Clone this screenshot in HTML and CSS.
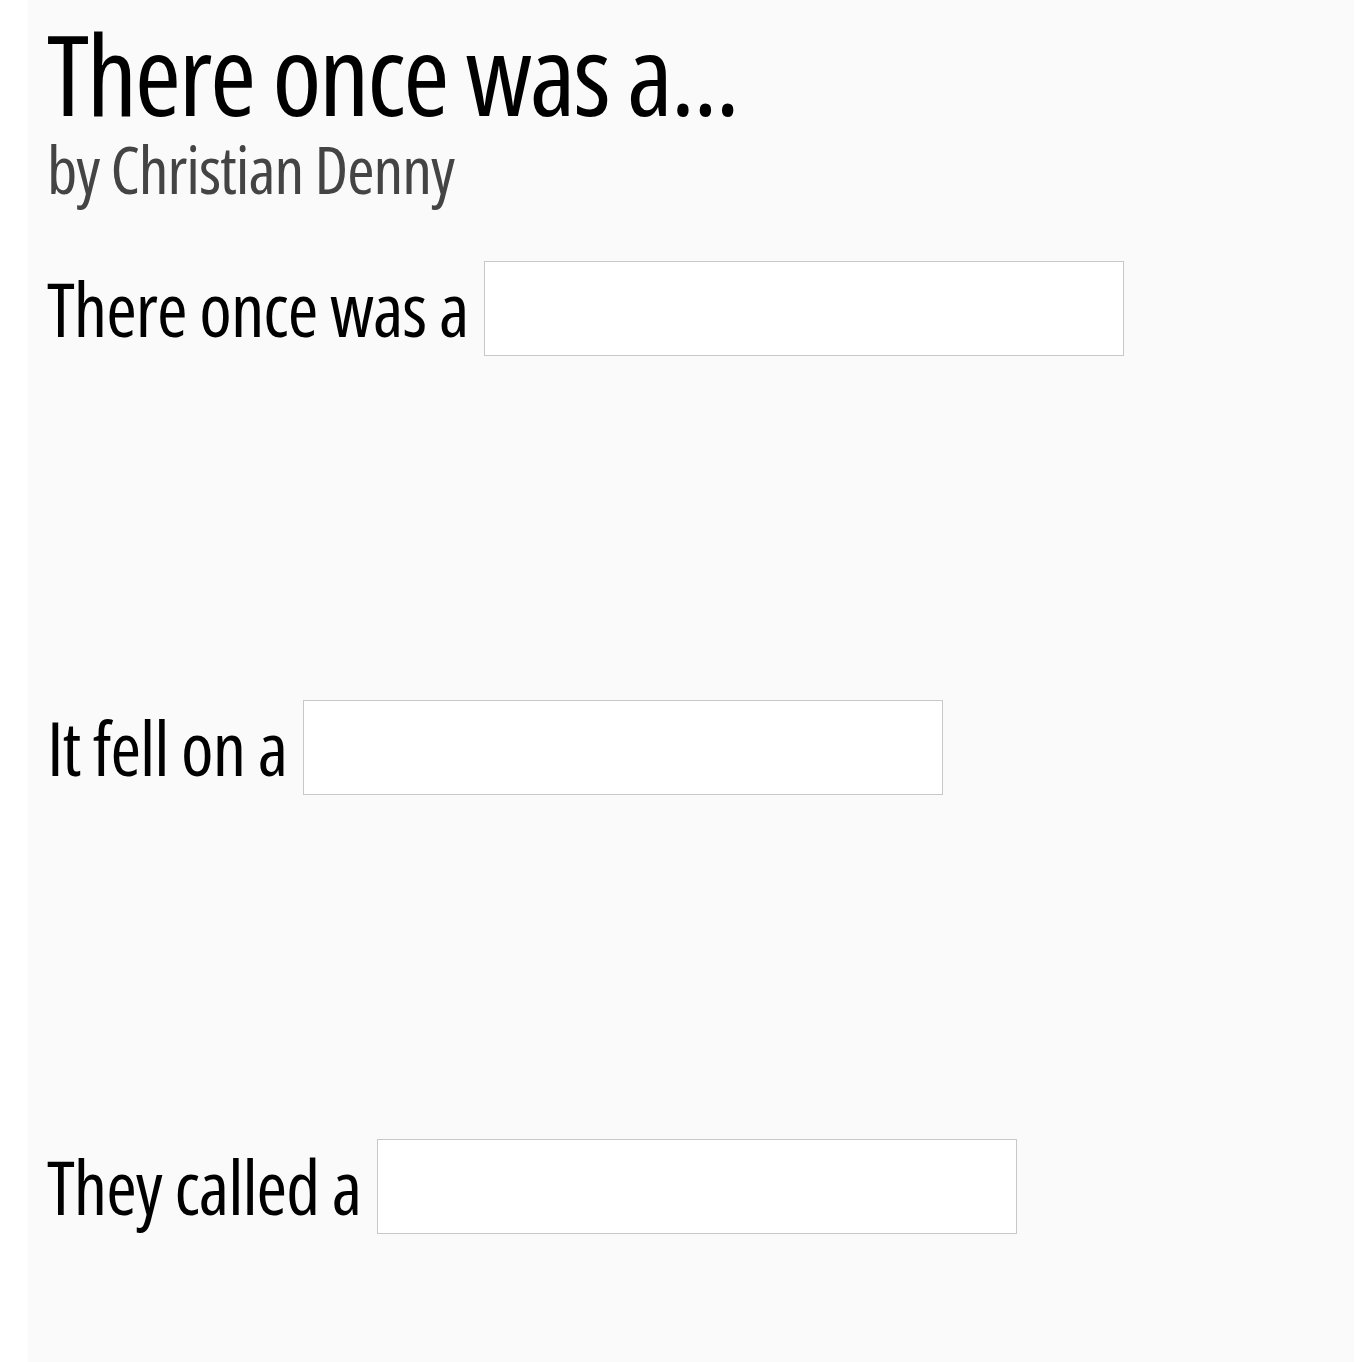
FILE: index.html
```html
<!DOCTYPE html>
<html>
<head>
<meta charset="utf-8">
<link rel="stylesheet" href="styles.css">
</head>
<body>
<main class="page">
  <header class="head">
    <h1 class="title">There once was a...</h1>
    <p class="byline">by Christian Denny</p>
  </header>
  <section class="row row-first">
    <label class="prompt">There once was a</label>
    <input class="field" type="text">
  </section>
  <section class="row">
    <label class="prompt">It fell on a</label>
    <input class="field" type="text">
  </section>
  <section class="row">
    <label class="prompt">They called a</label>
    <input class="field" type="text">
  </section>
</main>
</body>
</html>
```
FILE: styles.css
```css
html, body { margin: 0; padding: 0; background: #ffffff; }
body { font-family: "Open Sans", "Liberation Sans", sans-serif; font-stretch: 75%; }
.page {
  margin: 0 10px 0 28px;
  background: #fafafa;
  min-height: 1362px;
  padding: 0 19px;
  box-sizing: border-box;
  display: flex;
  flex-direction: column;
}
.head { padding-top: 17px; }
.title {
  margin: 0;
  font-size: 112px;
  line-height: 1;
  font-weight: 500;
  color: #000;
  letter-spacing: -2.4px;
}
.byline {
  margin: 6px 0 0;
  font-size: 66px;
  line-height: 1;
  font-weight: 400;
  color: #444;
  letter-spacing: -1px;
}
.row {
  display: flex;
  align-items: center;
  gap: 16px;
  margin-top: 344px;
}
.row-first { margin-top: 60px; }
.prompt {
  font-size: 74px;
  line-height: 1;
  font-weight: 500;
  color: #000;
  letter-spacing: -1px;
}
.field {
  width: 640px;
  height: 95px;
  box-sizing: border-box;
  border: 1px solid #c8c8c8;
  background: #fff;
  margin: 0;
}
```
